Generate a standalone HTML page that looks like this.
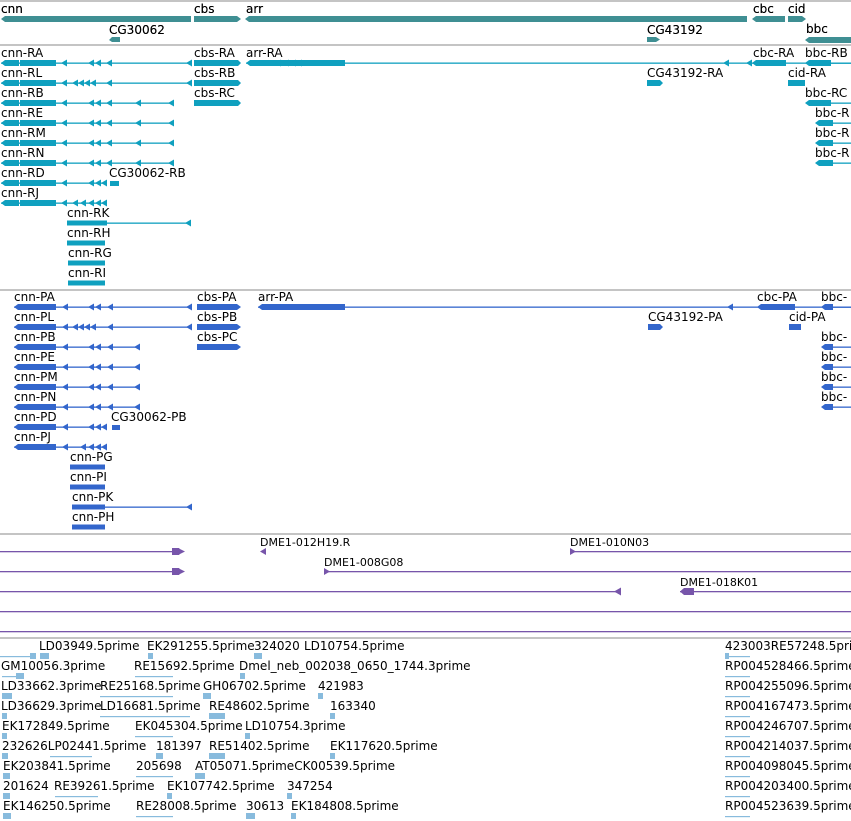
<!DOCTYPE html>
<html><head><meta charset="utf-8"><style>
html,body{margin:0;padding:0;background:#fff}
svg{display:block}
text{font-family:"DejaVu Sans","Liberation Sans",sans-serif;font-size:12px;fill:#000}
.s{font-size:11px}
</style></head><body>
<svg width="851" height="821" viewBox="0 0 851 821" xmlns="http://www.w3.org/2000/svg">
<defs>
<path id="L" d="M0,0 l6,-3.5 v7z"/>
<path id="R" d="M0,0 l-6,-3.5 v7z"/>
</defs>
<!-- separators -->
<g fill="#c4c4c4">
<rect x="0" y="0" width="851" height="2"/>
<rect x="0" y="44" width="851" height="2"/>
<rect x="0" y="289" width="851" height="2"/>
<rect x="0" y="533" width="851" height="2"/>
<rect x="0" y="637" width="851" height="2"/>
</g>

<!-- gene track -->
<g fill="#3f8f93">
<text x="1" y="13">cnn</text><text x="194" y="13">cbs</text><text x="246" y="13">arr</text>
<text x="753" y="13">cbc</text><text x="788" y="13">cid</text><text x="806" y="33">bbc</text>
<text x="109" y="34">CG30062</text><text x="647" y="34">CG43192</text>
<path d="M1,19 l4,-3 h186 v6 h-186z M194,16 h43 l4,3 l-4,3 h-43z M245,19 l4,-3 h498 v6 h-498z M752,19 l4,-3 h29 v6 h-29z M788,16 h14 l4,3 l-4,3 h-14z M109,40 l3,-3 h8 v5 h-8z M647,37 h9 l4,2.5 l-4,2.5 h-9z M805,40 l4,-3 h42 v6 h-42z"/>
</g>
<g fill="#000"><text x="1" y="13">cnn</text><text x="194" y="13">cbs</text><text x="246" y="13">arr</text>
<text x="753" y="13">cbc</text><text x="788" y="13">cid</text><text x="806" y="33">bbc</text>
<text x="109" y="34">CG30062</text><text x="647" y="34">CG43192</text></g>

<!-- transcripts -->
<g>
<text x="1" y="57">cnn-RA</text><text x="1" y="77">cnn-RL</text><text x="1" y="97">cnn-RB</text><text x="1" y="117">cnn-RE</text>
<text x="1" y="137">cnn-RM</text><text x="1" y="157">cnn-RN</text><text x="1" y="177">cnn-RD</text><text x="1" y="197">cnn-RJ</text>
<text x="67" y="217">cnn-RK</text><text x="67" y="237">cnn-RH</text><text x="68" y="257">cnn-RG</text><text x="68" y="277">cnn-RI</text>
<text x="109" y="177">CG30062-RB</text>
<text x="194" y="57">cbs-RA</text><text x="194" y="77">cbs-RB</text><text x="194" y="97">cbs-RC</text>
<text x="246" y="57">arr-RA</text><text x="647" y="77">CG43192-RA</text>
<text x="753" y="57">cbc-RA</text><text x="788" y="77">cid-RA</text>
<text x="805" y="57">bbc-RB</text><text x="805" y="97">bbc-RC</text>
<text x="815" y="117">bbc-R</text><text x="815" y="137">bbc-R</text><text x="815" y="157">bbc-R</text>
</g>
<g fill="#0fa0bf" stroke="none">
<rect x="1" y="62.5" width="190" height="1.3"/><rect x="1" y="82.5" width="190" height="1.3"/>
<rect x="1" y="102.5" width="172" height="1.3"/><rect x="1" y="122.5" width="172" height="1.3"/>
<rect x="1" y="142.5" width="172" height="1.3"/><rect x="1" y="162.5" width="172" height="1.3"/>
<rect x="1" y="182.5" width="106" height="1.3"/><rect x="1" y="202.5" width="106" height="1.3"/>
<rect x="67" y="222.5" width="124" height="1.3"/><rect x="67" y="242.5" width="38" height="1.3"/>
<rect x="68" y="262.5" width="37" height="1.3"/><rect x="68" y="282.5" width="37" height="1.3"/>
<path d="M1,63 l4,-3 h14 v6 h-14z M20,60 h36 v6 h-36z M1,83 l4,-3 h14 v6 h-14z M20,80 h36 v6 h-36z M1,103 l4,-3 h14 v6 h-14z M20,100 h36 v6 h-36z M1,123 l4,-3 h14 v6 h-14z M20,120 h36 v6 h-36z M1,143 l4,-3 h14 v6 h-14z M20,140 h36 v6 h-36z M1,163 l4,-3 h14 v6 h-14z M20,160 h36 v6 h-36z M1,183 l4,-3 h14 v6 h-14z M20,180 h36 v6 h-36z M1,203 l4,-3 h14 v6 h-14z M20,200 h36 v6 h-36z"/>
<rect x="67" y="220.5" width="40" height="5"/><rect x="67" y="240.5" width="38" height="5"/><rect x="68" y="260.5" width="37" height="5"/><rect x="68" y="280.5" width="37" height="5"/>
<rect x="110" y="181" width="9" height="5"/>
<use href="#L" x="61" y="63"/><use href="#L" x="88" y="63"/><use href="#L" x="95" y="63"/><use href="#L" x="106" y="63"/><use href="#L" x="186" y="63"/>
<use href="#L" x="61" y="83"/><use href="#L" x="72" y="83"/><use href="#L" x="78" y="83"/><use href="#L" x="84" y="83"/><use href="#L" x="90" y="83"/><use href="#L" x="106" y="83"/><use href="#L" x="186" y="83"/>
<use href="#L" x="61" y="103"/><use href="#L" x="88" y="103"/><use href="#L" x="95" y="103"/><use href="#L" x="106" y="103"/><use href="#L" x="135" y="103"/><use href="#L" x="168" y="103"/>
<use href="#L" x="61" y="123"/><use href="#L" x="88" y="123"/><use href="#L" x="95" y="123"/><use href="#L" x="106" y="123"/><use href="#L" x="135" y="123"/><use href="#L" x="168" y="123"/>
<use href="#L" x="61" y="143"/><use href="#L" x="88" y="143"/><use href="#L" x="95" y="143"/><use href="#L" x="106" y="143"/><use href="#L" x="135" y="143"/><use href="#L" x="168" y="143"/>
<use href="#L" x="61" y="163"/><use href="#L" x="88" y="163"/><use href="#L" x="95" y="163"/><use href="#L" x="106" y="163"/><use href="#L" x="135" y="163"/><use href="#L" x="168" y="163"/>
<use href="#L" x="61" y="183"/><use href="#L" x="88" y="183"/><use href="#L" x="95" y="183"/><use href="#L" x="101" y="183"/>
<use href="#L" x="61" y="203"/><use href="#L" x="72" y="203"/><use href="#L" x="80" y="203"/><use href="#L" x="88" y="203"/><use href="#L" x="95" y="203"/><use href="#L" x="101" y="203"/>
<use href="#L" x="185" y="223"/>
<path d="M194,60 h44 l3,3 l-3,3 h-44z M194,80 h44 l3,3 l-3,3 h-44z M194,100 h44 l3,3 l-3,3 h-44z"/>
<rect x="246" y="62.5" width="605" height="1.3"/>
<path d="M246,63 l4,-3 h95 v6 h-95z"/>
<use href="#L" x="275" y="63"/><use href="#L" x="283" y="63"/><use href="#L" x="290" y="63"/><use href="#L" x="296" y="63"/>
<use href="#L" x="723" y="63"/><use href="#L" x="746" y="63"/>
<path d="M752,63 l4,-3 h30 v6 h-30z"/>
<path d="M647,80 h13 l3,3 l-3,3 h-13z M788,80 h17 v6 h-17z"/>
<path d="M805,63 l4,-3 h22 v6 h-22z M805,103 l4,-3 h22 v6 h-22z M815,123 l4,-3 h14 v6 h-14z M815,143 l4,-3 h14 v6 h-14z M815,163 l4,-3 h14 v6 h-14z"/>
<rect x="830" y="62.5" width="21" height="1.3"/><rect x="830" y="102.5" width="21" height="1.3"/><rect x="833" y="122.5" width="18" height="1.3"/><rect x="833" y="142.5" width="18" height="1.3"/><rect x="833" y="162.5" width="18" height="1.3"/>
</g>

<!-- proteins -->
<g>
<text x="14" y="301">cnn-PA</text><text x="14" y="321">cnn-PL</text><text x="14" y="341">cnn-PB</text><text x="14" y="361">cnn-PE</text>
<text x="14" y="381">cnn-PM</text><text x="14" y="401">cnn-PN</text><text x="14" y="421">cnn-PD</text><text x="14" y="441">cnn-PJ</text>
<text x="70" y="461">cnn-PG</text><text x="70" y="481">cnn-PI</text><text x="72" y="501">cnn-PK</text><text x="72" y="521">cnn-PH</text>
<text x="111" y="421">CG30062-PB</text>
<text x="197" y="301">cbs-PA</text><text x="197" y="321">cbs-PB</text><text x="197" y="341">cbs-PC</text>
<text x="258" y="301">arr-PA</text><text x="648" y="321">CG43192-PA</text>
<text x="757" y="301">cbc-PA</text><text x="789" y="321">cid-PA</text>
<text x="821" y="301">bbc-</text><text x="821" y="341">bbc-</text><text x="821" y="361">bbc-</text><text x="821" y="381">bbc-</text><text x="821" y="401">bbc-</text>
</g>
<g fill="#3366cc">
<rect x="14" y="306.5" width="177" height="1.3"/><rect x="14" y="326.5" width="177" height="1.3"/>
<rect x="14" y="346.5" width="125" height="1.3"/><rect x="14" y="366.5" width="125" height="1.3"/>
<rect x="14" y="386.5" width="125" height="1.3"/><rect x="14" y="406.5" width="125" height="1.3"/>
<rect x="14" y="426.5" width="93" height="1.3"/><rect x="14" y="446.5" width="93" height="1.3"/>
<rect x="70" y="466.5" width="35" height="5" transform="translate(0,-2)"/><rect x="70" y="484.5" width="35" height="5"/>
<rect x="72" y="506.5" width="119" height="1.3"/><rect x="72" y="524.5" width="33" height="5"/><rect x="72" y="504.5" width="33" height="5"/>
<path d="M14,307 l4,-3 h38 v6 h-38z M14,327 l4,-3 h38 v6 h-38z M14,347 l4,-3 h38 v6 h-38z M14,367 l4,-3 h38 v6 h-38z M14,387 l4,-3 h38 v6 h-38z M14,407 l4,-3 h38 v6 h-38z M14,427 l4,-3 h38 v6 h-38z M14,447 l4,-3 h38 v6 h-38z"/>
<use href="#L" x="62" y="307"/><use href="#L" x="88" y="307"/><use href="#L" x="95" y="307"/><use href="#L" x="107" y="307"/><use href="#L" x="186" y="307"/>
<use href="#L" x="62" y="327"/><use href="#L" x="72" y="327"/><use href="#L" x="78" y="327"/><use href="#L" x="84" y="327"/><use href="#L" x="90" y="327"/><use href="#L" x="107" y="327"/><use href="#L" x="186" y="327"/>
<use href="#L" x="62" y="347"/><use href="#L" x="88" y="347"/><use href="#L" x="95" y="347"/><use href="#L" x="107" y="347"/><use href="#L" x="134" y="347"/>
<use href="#L" x="62" y="367"/><use href="#L" x="88" y="367"/><use href="#L" x="95" y="367"/><use href="#L" x="107" y="367"/><use href="#L" x="134" y="367"/>
<use href="#L" x="62" y="387"/><use href="#L" x="88" y="387"/><use href="#L" x="95" y="387"/><use href="#L" x="107" y="387"/><use href="#L" x="134" y="387"/>
<use href="#L" x="62" y="407"/><use href="#L" x="88" y="407"/><use href="#L" x="95" y="407"/><use href="#L" x="107" y="407"/><use href="#L" x="134" y="407"/>
<use href="#L" x="62" y="427"/><use href="#L" x="88" y="427"/><use href="#L" x="95" y="427"/><use href="#L" x="101" y="427"/>
<use href="#L" x="62" y="447"/><use href="#L" x="80" y="447"/><use href="#L" x="88" y="447"/><use href="#L" x="95" y="447"/><use href="#L" x="101" y="447"/>
<use href="#L" x="186" y="507"/>
<rect x="112" y="425" width="8" height="5"/>
<path d="M197,304 h40 l4,3 l-4,3 h-40z M197,324 h40 l4,3 l-4,3 h-40z M197,344 h40 l4,3 l-4,3 h-40z"/>
<rect x="258" y="306.5" width="593" height="1.3"/>
<path d="M258,307 l4,-3 h83 v6 h-83z"/>
<use href="#L" x="727" y="307"/>
<path d="M757,307 l4,-3 h34 v6 h-34z M648,324 h12 l3,3 l-3,3 h-12z M789,324 h12 v6 h-12z"/>
<path d="M821,307 l4,-3 h8 v6 h-8z M821,347 l4,-3 h8 v6 h-8z M821,367 l4,-3 h8 v6 h-8z M821,387 l4,-3 h8 v6 h-8z M821,407 l4,-3 h8 v6 h-8z"/>
<rect x="830" y="306.5" width="21" height="1.3"/><rect x="830" y="346.5" width="21" height="1.3"/><rect x="830" y="366.5" width="21" height="1.3"/><rect x="830" y="386.5" width="21" height="1.3"/><rect x="830" y="406.5" width="21" height="1.3"/>
</g>

<!-- DME -->
<g class="s">
<text class="s" x="260" y="546">DME1-012H19.R</text><text class="s" x="570" y="546">DME1-010N03</text>
<text class="s" x="324" y="566">DME1-008G08</text><text class="s" x="680" y="586">DME1-018K01</text>
</g>
<g fill="#7755aa">
<rect x="0" y="551" width="180" height="1.3"/><rect x="570" y="551" width="281" height="1.3"/>
<rect x="0" y="571" width="180" height="1.3"/><rect x="324" y="571" width="527" height="1.3"/>
<rect x="0" y="591" width="620" height="1.3"/><rect x="680" y="591" width="171" height="1.3"/>
<rect x="0" y="611" width="851" height="1.3"/><rect x="0" y="631" width="851" height="1.3"/>
<path d="M172,548 h7 l3,3.5 l-3,3.5 h-7z M178,548 l7,3.5 l-7,3.5z M172,568 h7 l3,3.5 l-3,3.5 h-7z M178,568 l7,3.5 l-7,3.5z"/>
<path d="M260,551.5 l6,-3.5 v7z M570,548 l6,3.5 l-6,3.5z M324,568 l6,3.5 l-6,3.5z M614,591.5 l7,-4 v8z M680,591.5 l4,-3.5 h10 v7 h-10z"/>
</g>

<!-- ESTs -->
<g>
<text x="39" y="650">LD03949.5prime</text><text x="147" y="650">EK291255.5prime</text><text x="254" y="650">324020</text><text x="304" y="650">LD10754.5prime</text><text x="725" y="650">423003RE57248.5prime</text>
<text x="1" y="670">GM10056.3prime</text><text x="134" y="670">RE15692.5prime</text><text x="239" y="670">Dmel_neb_002038_0650_1744.3prime</text><text x="725" y="670">RP004528466.5prime</text>
<text x="1" y="690">LD33662.3prime</text><text x="100" y="690">RE25168.5prime</text><text x="203" y="690">GH06702.5prime</text><text x="318" y="690">421983</text><text x="725" y="690">RP004255096.5prime</text>
<text x="1" y="710">LD36629.3prime</text><text x="100" y="710">LD16681.5prime</text><text x="209" y="710">RE48602.5prime</text><text x="330" y="710">163340</text><text x="725" y="710">RP004167473.5prime</text>
<text x="2" y="730">EK172849.5prime</text><text x="135" y="730">EK045304.5prime</text><text x="245" y="730">LD10754.3prime</text><text x="725" y="730">RP004246707.5prime</text>
<text x="2" y="750">232626LP02441.5prime</text><text x="156" y="750">181397</text><text x="209" y="750">RE51402.5prime</text><text x="330" y="750">EK117620.5prime</text><text x="725" y="750">RP004214037.5prime</text>
<text x="3" y="770">EK203841.5prime</text><text x="136" y="770">205698</text><text x="195" y="770">AT05071.5primeCK00539.5prime</text><text x="725" y="770">RP004098045.5prime</text>
<text x="3" y="790">201624</text><text x="54" y="790">RE39261.5prime</text><text x="167" y="790">EK107742.5prime</text><text x="287" y="790">347254</text><text x="725" y="790">RP004203400.5prime</text>
<text x="3" y="810">EK146250.5prime</text><text x="136" y="810">RE28008.5prime</text><text x="246" y="810">30613</text><text x="291" y="810">EK184808.5prime</text><text x="725" y="810">RP004523639.5prime</text>
</g>
<g fill="#88bbdd">
<rect x="0" y="656" width="34" height="1.2"/><rect x="30" y="653" width="6" height="6"/><rect x="40" y="653" width="9" height="6"/><rect x="148" y="653" width="5" height="6"/><rect x="254" y="653" width="8" height="6"/><rect x="725" y="656" width="25" height="1.2"/><rect x="725" y="653" width="4" height="6"/>
<rect x="2" y="676" width="20" height="1.2"/><rect x="16" y="673" width="8" height="6"/><rect x="135" y="676" width="38" height="1.2"/><rect x="240" y="673" width="5" height="6"/><rect x="725" y="676" width="25" height="1.2"/>
<rect x="2" y="693" width="10" height="6"/><rect x="100" y="696" width="73" height="1.2"/><rect x="203" y="693" width="8" height="6"/><rect x="318" y="693" width="5" height="6"/><rect x="725" y="696" width="25" height="1.2"/>
<rect x="2" y="713" width="5" height="6"/><rect x="100" y="716" width="90" height="1.2"/><rect x="209" y="713" width="16" height="6"/><rect x="330" y="713" width="5" height="6"/><rect x="725" y="716" width="25" height="1.2"/>
<rect x="2" y="733" width="5" height="6"/><rect x="135" y="736" width="38" height="1.2"/><rect x="245" y="733" width="5" height="6"/><rect x="725" y="736" width="25" height="1.2"/>
<rect x="2" y="753" width="6" height="6"/><rect x="50" y="756" width="42" height="1.2"/><rect x="156" y="753" width="7" height="6"/><rect x="209" y="753" width="16" height="6"/><rect x="330" y="753" width="5" height="6"/><rect x="725" y="756" width="25" height="1.2"/>
<rect x="3" y="773" width="7" height="6"/><rect x="136" y="776" width="37" height="1.2"/><rect x="195" y="773" width="10" height="6"/><rect x="725" y="776" width="25" height="1.2"/>
<rect x="3" y="793" width="7" height="6"/><rect x="55" y="796" width="43" height="1.2"/><rect x="167" y="793" width="5" height="6"/><rect x="287" y="793" width="5" height="6"/><rect x="725" y="796" width="25" height="1.2"/>
<rect x="3" y="813" width="8" height="6"/><rect x="136" y="816" width="37" height="1.2"/><rect x="246" y="813" width="9" height="6"/><rect x="291" y="813" width="5" height="6"/><rect x="725" y="816" width="25" height="1.2"/>
</g>
</svg>
</body></html>
